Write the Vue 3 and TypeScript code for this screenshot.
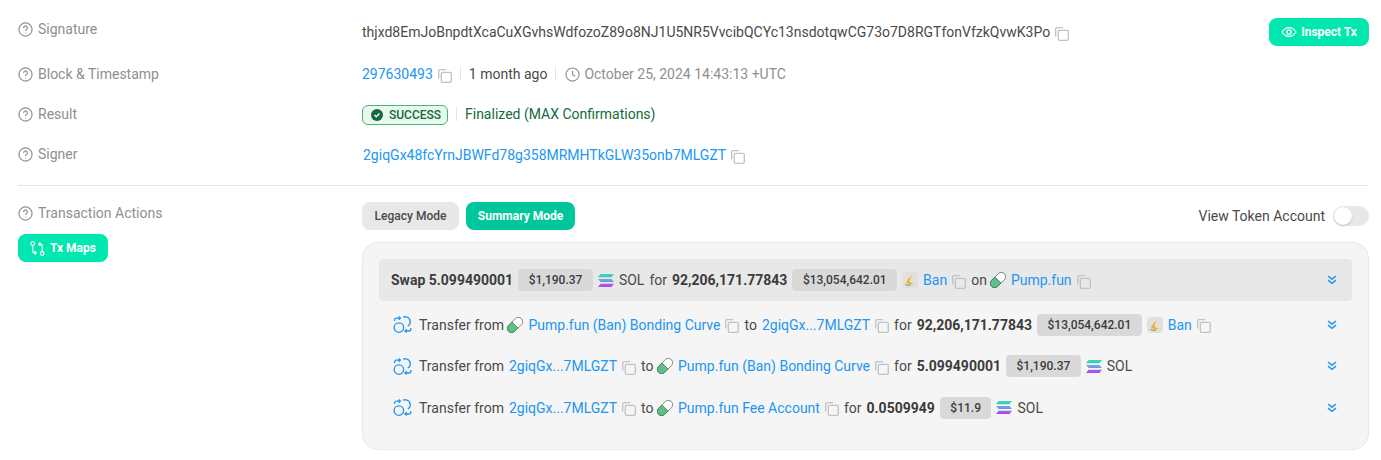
<script setup lang="ts">
type Part =
  | { t: 'text'; v: string }
  | { t: 'bold'; v: string }
  | { t: 'link'; v: string }
  | { t: 'usd'; v: string }
  | { t: 'sol' }
  | { t: 'pill' }
  | { t: 'ban' }

const swap: Part[] = [
  { t: 'bold', v: 'Swap 5.099490001' },
  { t: 'usd', v: '$1,190.37' },
  { t: 'sol' },
  { t: 'text', v: 'SOL' },
  { t: 'text', v: 'for' },
  { t: 'bold', v: '92,206,171.77843' },
  { t: 'usd', v: '$13,054,642.01' },
  { t: 'ban' },
  { t: 'link', v: 'Ban' },
  { t: 'text', v: 'on' },
  { t: 'pill' },
  { t: 'link', v: 'Pump.fun' },
]

const transfers: Part[][] = [
  [
    { t: 'text', v: 'Transfer from' },
    { t: 'pill' },
    { t: 'link', v: 'Pump.fun (Ban) Bonding Curve' },
    { t: 'text', v: 'to' },
    { t: 'link', v: '2giqGx...7MLGZT' },
    { t: 'text', v: 'for' },
    { t: 'bold', v: '92,206,171.77843' },
    { t: 'usd', v: '$13,054,642.01' },
    { t: 'ban' },
    { t: 'link', v: 'Ban' },
  ],
  [
    { t: 'text', v: 'Transfer from' },
    { t: 'link', v: '2giqGx...7MLGZT' },
    { t: 'text', v: 'to' },
    { t: 'pill' },
    { t: 'link', v: 'Pump.fun (Ban) Bonding Curve' },
    { t: 'text', v: 'for' },
    { t: 'bold', v: '5.099490001' },
    { t: 'usd', v: '$1,190.37' },
    { t: 'sol' },
    { t: 'text', v: 'SOL' },
  ],
  [
    { t: 'text', v: 'Transfer from' },
    { t: 'link', v: '2giqGx...7MLGZT' },
    { t: 'text', v: 'to' },
    { t: 'pill' },
    { t: 'link', v: 'Pump.fun Fee Account' },
    { t: 'text', v: 'for' },
    { t: 'bold', v: '0.0509949' },
    { t: 'usd', v: '$11.9' },
    { t: 'sol' },
    { t: 'text', v: 'SOL' },
  ],
]

// the head row and the three transfer rows share one renderer below
const lines = [swap, ...transfers]
</script>

<template>
  <div class="page">
    <div class="row sig-row">
      <div class="label"><svg class="help" viewBox="0 0 16 16"><circle cx="8" cy="8" r="7" /><path d="M6 6.300a2 2 0 1 1 3 1.700c-.7.400-1 .8-1 1.500" /><path d="M8 11.200v.8" /></svg>Signature</div>
      <div class="value">
        <span class="dark">thjxd8EmJoBnpdtXcaCuXGvhsWdfozoZ89o8NJ1U5NR5VvcibQCYc13nsdotqwCG73o7D8RGTfonVfzkQvwK3Po</span>
        <svg class="copy" viewBox="0 0 14 14"><path d="M.7 9.500V2C.7 1.200 1.200.7 2 .7h6" /><rect x="3.300" y="3.300" width="10" height="10" rx="1.300" /></svg>
        <button class="btn inspect">
          <svg class="eye" viewBox="0 0 16 16"><path d="M1 8c1.800-3 4.100-4.400 7-4.400S13.200 5 15 8c-1.800 3-4.100 4.400-7 4.400S2.800 11 1 8z" /><circle cx="8" cy="8" r="2.200" /></svg>Inspect Tx
        </button>
      </div>
    </div>

    <div class="row">
      <div class="label"><svg class="help" viewBox="0 0 16 16"><circle cx="8" cy="8" r="7" /><path d="M6 6.300a2 2 0 1 1 3 1.700c-.7.400-1 .8-1 1.500" /><path d="M8 11.200v.8" /></svg>Block &amp; Timestamp</div>
      <div class="value">
        <a class="link">297630493</a>
        <svg class="copy" viewBox="0 0 14 14"><path d="M.7 9.500V2C.7 1.200 1.200.7 2 .7h6" /><rect x="3.300" y="3.300" width="10" height="10" rx="1.300" /></svg>
        <span class="sep"></span>
        <span class="dark">1 month ago</span>
        <span class="sep"></span>
        <svg class="clock" viewBox="0 0 16 16"><circle cx="8" cy="8" r="7" /><path d="M8 4v4.200l2.800 1.600" /></svg>
        <span class="grey">October 25, 2024 14:43:13 +UTC</span>
      </div>
    </div>

    <div class="row">
      <div class="label"><svg class="help" viewBox="0 0 16 16"><circle cx="8" cy="8" r="7" /><path d="M6 6.300a2 2 0 1 1 3 1.700c-.7.400-1 .8-1 1.500" /><path d="M8 11.200v.8" /></svg>Result</div>
      <div class="value">
        <span class="success">
          <svg class="check" viewBox="0 0 12 12"><circle cx="6" cy="6" r="6" fill="#146a3c" /><path d="M3.500 6.100l1.800 1.700 3.200-3.300" fill="none" stroke="#fff" stroke-width="1.400" /></svg>SUCCESS
        </span>
        <span class="sep"></span>
        <span class="final">Finalized (MAX Confirmations)</span>
      </div>
    </div>

    <div class="row">
      <div class="label"><svg class="help" viewBox="0 0 16 16"><circle cx="8" cy="8" r="7" /><path d="M6 6.300a2 2 0 1 1 3 1.700c-.7.400-1 .8-1 1.500" /><path d="M8 11.200v.8" /></svg>Signer</div>
      <div class="value signer">
        <a class="link">2giqGx48fcYrnJBWFd78g358MRMHTkGLW35onb7MLGZT</a>
        <svg class="copy" viewBox="0 0 14 14"><path d="M.7 9.500V2C.7 1.200 1.200.7 2 .7h6" /><rect x="3.300" y="3.300" width="10" height="10" rx="1.300" /></svg>
      </div>
    </div>

    <div class="divider"></div>

    <div class="actions">
      <div class="side">
        <div class="label"><svg class="help" viewBox="0 0 16 16"><circle cx="8" cy="8" r="7" /><path d="M6 6.300a2 2 0 1 1 3 1.700c-.7.400-1 .8-1 1.500" /><path d="M8 11.200v.8" /></svg>Transaction Actions</div>
        <button class="btn maps">
          <svg class="map-ic" viewBox="0 0 14 14"><circle cx="2.600" cy="2.400" r="1.700" /><circle cx="11.400" cy="11.600" r="1.700" /><path d="M2.600 4.100v5.400c0 1 .6 1.600 1.600 1.600h1.400M4.300 9.400L5.900 11l-1.600 1.600" /><path d="M11.400 9.900V4.500c0-1-.6-1.600-1.600-1.600H8.400M9.700 4.600L8.100 3l1.600-1.600" /></svg>Tx Maps
        </button>
      </div>
      <div class="main">
        <div class="mode-bar">
          <button class="btn legacy">Legacy Mode</button>
          <button class="btn summary">Summary Mode</button>
          <span class="view-token">View Token Account</span>
          <span class="toggle"><span class="knob"></span></span>
        </div>

        <div class="panel">
          <div v-for="(row, n) in lines" :key="n" class="line" :class="n === 0 ? 'head' : 'sub'">
            <svg v-if="n > 0" class="swap-ic" viewBox="0 0 20 20">
              <circle cx="6.200" cy="13.200" r="5" />
              <path d="M10.600 2.200a5.200 5.200 0 0 1 3.200-.2 5.200 5.200 0 0 1 1.800 9.600" />
              <path d="M1.600 6.200V5.200a2 2 0 0 1 2-2H7.600M6 1.500l1.800 1.700L6 4.900" />
              <path d="M18.800 13.800v1a2 2 0 0 1-2 2h-4.200M14.400 15.100l-1.800 1.700 1.800 1.700" />
            </svg>
            <template v-for="(p, i) in row" :key="i">
              <span v-if="p.t === 'text'" class="dark">{{ p.v }}</span>
              <b v-else-if="p.t === 'bold'">{{ p.v }}</b>
              <span v-else-if="p.t === 'usd'" class="usd">{{ p.v }}</span>
              <svg v-else-if="p.t === 'sol'" class="sol" viewBox="0 0 16 13"><defs><linearGradient :id="`sol-${n}`" x1="0" y1="0" x2="0" y2="1"><stop offset="0" stop-color="#2fdcb0" /><stop offset=".5" stop-color="#6f9fe0" /><stop offset="1" stop-color="#b83cf0" /></linearGradient></defs><path :fill="`url(#sol-${n})`" d="M2.600 0H16l-2.600 3.200H0zM0 4.900h13.400L16 8.100H2.600zM2.600 9.800H16L13.400 13H0z" /></svg>
              <svg v-else-if="p.t === 'pill'" class="pill" viewBox="0 0 16 16"><g transform="rotate(-45 8 8)"><rect x="-1" y="3.700" width="18" height="8.600" rx="4.300" fill="#fff" stroke="#4a6a58" stroke-width=".7" /><path d="M8 3.700H3.300a4.300 4.300 0 0 0 0 8.600H8z" fill="#5cc186" stroke="#4a6a58" stroke-width=".7" /></g></svg>
              <svg v-else-if="p.t === 'ban'" class="ban" viewBox="0 0 16 16"><rect width="16" height="16" rx="4" fill="#e2e0dc" /><path d="M10 2.500C8 5 5.500 7.500 4 10.500c2.500 1.600 5.500 2 8.500 1.300-2.700-.6-4.500-1.500-5-2.800.6-2.300 1.800-4.400 2.500-6.500z" fill="#e9b62f" /><path d="M3.500 12.500c2 .8 4 .9 5.500.4" stroke="#666" stroke-width=".8" fill="none" /></svg>
              <template v-else-if="p.t === 'link'">
                <a class="link">{{ p.v }}</a>
                <svg class="copy" viewBox="0 0 14 14"><path d="M.7 9.500V2C.7 1.200 1.200.7 2 .7h6" /><rect x="3.300" y="3.300" width="10" height="10" rx="1.300" /></svg>
              </template>
            </template>
            <svg class="chev" viewBox="0 0 10 10"><path d="M1 1l4 3.200L9 1M1 5.200l4 3.200 4-3.200" /></svg>
          </div>
        </div>
      </div>
    </div>
  </div>
</template>

<style>
html,
body {
  background: #fff;
}
</style>

<style scoped>
.page {
  width: 1381px;
  height: 460px;
  box-sizing: border-box;
  padding: 18px 12px 0 18px;
  font-family: Roboto, sans-serif;
  font-size: 14px;
  color: #4a4a4a;
  overflow: hidden;
}

.row {
  display: grid;
  grid-template-columns: 344px 1fr;
  align-items: center;
  height: 40px;
}

.sig-row {
  height: 28px;
  margin-bottom: 8px;
}

.sig-row .label {
  margin-top: -6px;
}

.label {
  display: flex;
  align-items: center;
  color: #8f8f8f;
  line-height: 20px;
}

.help {
  width: 15px;
  height: 15px;
  margin: 1px 5px 0 0;
  fill: none;
  stroke: #929292;
  stroke-width: 1.3;
  flex: none;
}

.value {
  display: flex;
  align-items: center;
  white-space: nowrap;
}

.signer {
  padding: 2px 0 0 1px;
}

.dark {
  color: #4a4a4a;
}

.grey {
  color: #8f8f8f;
}

.link {
  color: #2196f3;
}

.copy {
  width: 14px;
  height: 14px;
  margin: 3px 0 0 5px;
  fill: none;
  stroke: #c0c2c6;
  stroke-width: 1.3;
  flex: none;
}

.btn {
  border: 0;
  border-radius: 8px;
  height: 28px;
  font-family: Roboto, sans-serif;
  font-size: 12px;
  font-weight: 700;
  display: inline-flex;
  align-items: center;
  justify-content: center;
  padding: 0;
}

.inspect {
  margin-left: auto;
  width: 100px;
  background: #00e8b0;
  color: #fff;
}

.eye {
  width: 16px;
  height: 16px;
  margin-right: 4px;
  fill: none;
  stroke: #fff;
  stroke-width: 1.3;
}

.sep {
  width: 1px;
  height: 14px;
  background: #e4e4e4;
  margin: 0 8px;
}

.clock {
  width: 15px;
  height: 15px;
  margin: 0 4px 0 1px;
  fill: none;
  stroke: #8f8f8f;
  stroke-width: 1.2;
}

.success {
  display: inline-flex;
  align-items: center;
  width: 86px;
  height: 20px;
  margin-top: 2px;
  box-sizing: border-box;
  padding-left: 8px;
  border: 1px solid #41b96e;
  border-radius: 6px;
  background: #e9f9ee;
  color: #146a3c;
  font-size: 12px;
  font-weight: 500;
}

.check {
  width: 12px;
  height: 12px;
  margin-right: 6px;
}

.final {
  color: #146a3c;
}

.divider {
  height: 1px;
  background: #e6e6e6;
  margin-top: 11px;
}

.actions {
  display: grid;
  grid-template-columns: 344px 1fr;
  padding-top: 16px;
}

.side .label {
  margin-top: 1px;
}

.maps {
  margin-top: 11px;
  width: 90px;
  background: #00e8b0;
  color: #fff;
}

.map-ic {
  width: 15px;
  height: 15px;
  margin-right: 5px;
  fill: none;
  stroke: #fff;
  stroke-width: 1.1;
}

.mode-bar {
  display: flex;
  align-items: center;
  height: 28px;
}

.legacy {
  width: 97px;
  background: #e8e8e8;
  color: #4a4a4a;
  font-weight: 500;
}

.summary {
  width: 109px;
  margin-left: 7px;
  background: #00c79b;
  color: #fff;
}

.view-token {
  margin-left: auto;
  margin-right: 8px;
  color: #4a4a4a;
}

.toggle {
  width: 36px;
  height: 20px;
  border-radius: 10px;
  background: #e8e8e8;
  position: relative;
}

.knob {
  position: absolute;
  left: 1px;
  top: 1px;
  width: 18px;
  height: 18px;
  border-radius: 50%;
  background: #fff;
  box-shadow: 0 1px 2px rgba(0, 0, 0, 0.2);
}

.panel {
  margin-top: 12px;
  height: 208px;
  box-sizing: border-box;
  padding: 16px;
  border: 1px solid #e9e9e9;
  border-radius: 16px;
  background: #f5f5f5;
}

.line {
  display: flex;
  align-items: center;
  white-space: nowrap;
}

.line > * {
  flex: none;
}

.head {
  height: 42px;
  margin-bottom: 3px;
  padding: 0 15px 0 12px;
  background: #e8e8e8;
  border-radius: 4px;
}

.sub {
  height: 41.5px;
  padding: 0 15px 0 14px;
}

.line b {
  font-weight: 700;
  color: #3c3c3c;
}

.line .dark,
.line .link,
.line b,
.line .usd,
.line .ban,
.line .sol {
  margin-left: 5px;
}

.line .pill {
  margin-left: 3px;
}

.sub .pill {
  margin-left: 3.5px;
}

.line > b:first-child {
  margin-left: 0;
}

.line > .swap-ic + .dark {
  margin-left: 7px;
}

.usd {
  display: inline-flex;
  align-items: center;
  height: 22px;
  padding: 0 10.5px;
  border-radius: 4px;
  background: #d9d9d9;
  font-size: 12px;
  font-weight: 500;
  color: #3c3c3c;
}

.sol {
  width: 16px;
  height: 13px;
}

.pill,
.ban {
  width: 16px;
  height: 16px;
}

.swap-ic {
  width: 19px;
  height: 19px;
  fill: none;
  stroke: #2196f3;
  stroke-width: 1.4;
}

.chev {
  margin-left: auto;
  width: 10px;
  height: 10px;
  fill: none;
  stroke: #2196f3;
  stroke-width: 1.5;
}
</style>
